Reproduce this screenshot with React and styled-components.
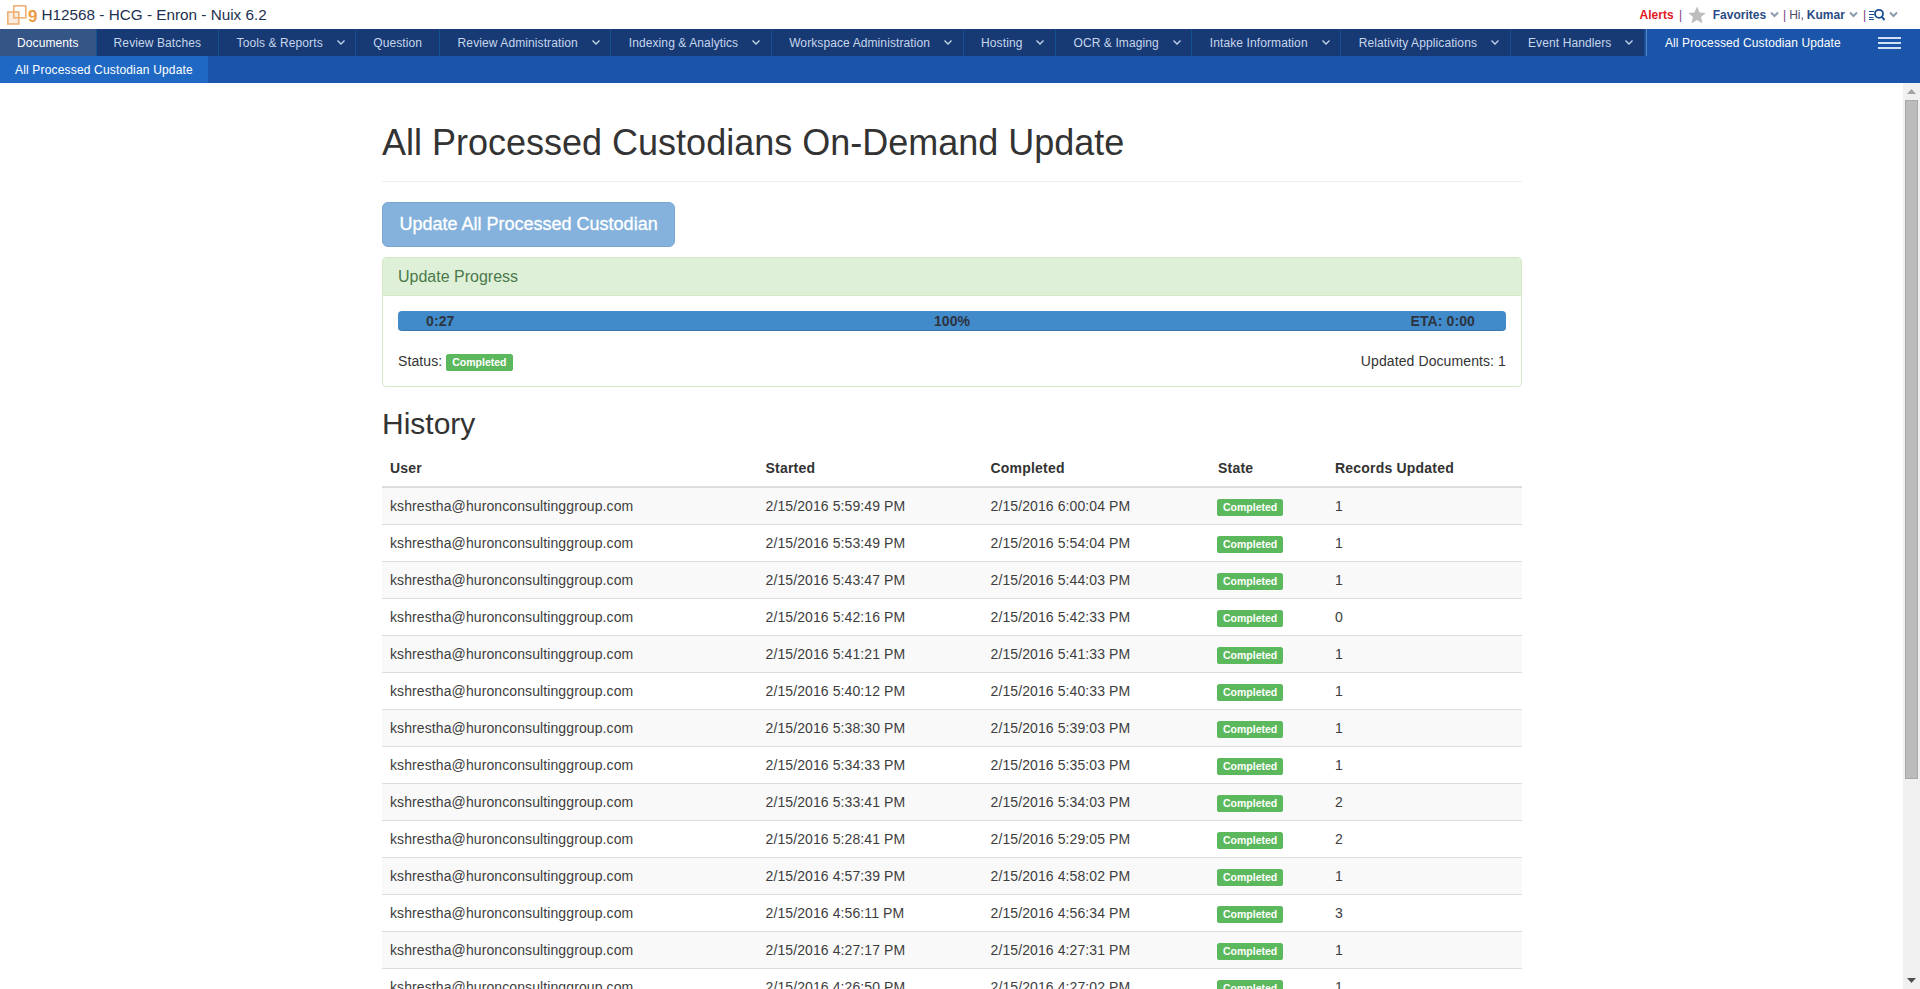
import React from "react";
import styled, { createGlobalStyle } from "styled-components";

const GlobalStyle = createGlobalStyle`
  html, body {
    margin: 0;
    height: 100%;
    overflow: hidden;
    background: #fff;
    font-family: "Liberation Sans", Arial, sans-serif;
    font-size: 14px;
    color: #333;
  }
`;

const Page = styled.div`
  display: flex;
  flex-direction: column;
  height: 100vh;
  overflow: hidden;
`;

const TopBar = styled.header`
  display: flex;
  align-items: center;
  justify-content: space-between;
  height: 29px;
  flex: none;
  padding: 0 22px 0 7px;
`;

const Brand = styled.div`
  display: flex;
  align-items: center;
`;

const BrandNine = styled.span`
  font-size: 17px;
  font-weight: 700;
  color: #ec9c45;
  margin: 5px 4px 0 1px;
`;

const BrandTitle = styled.span`
  font-size: 15.3px;
  color: #1c2f4f;
`;

const UserBar = styled.div`
  display: flex;
  align-items: center;
  font-size: 12px;
  color: #1c4f92;
`;

const Alerts = styled.span`
  color: #e0191f;
  font-weight: 700;
`;

const Pipe = styled.span`
  color: #7a3b7a;
  margin: ${(p) => p.$margin};
`;

const UserLink = styled.span`
  font-weight: 700;
  color: #2a4a85;
  margin-left: ${(p) => p.$gap || "0"};
`;

const Greeting = styled.span`
  color: #4a4a66;
  margin-right: 3px;
`;

const Caret = styled.svg`
  width: 9px;
  height: 7px;
  margin-left: 4px;
  fill: none;
  stroke: #8d9bb0;
  stroke-width: 2;
`;

const NavBar = styled.nav`
  display: flex;
  height: 27px;
  flex: none;
  background: #1b55a9;
`;

const Tabs = styled.div`
  display: flex;
  background: #183a74;
`;

const Tab = styled.div`
  display: flex;
  align-items: center;
  box-sizing: border-box;
  padding: ${(p) => (p.$menu ? "0 10.5px 0 17.5px" : "0 17px")};
  font-size: 12px;
  letter-spacing: 0.1px;
  white-space: nowrap;
  color: ${(p) => (p.$active ? "#fff" : "#c6d6ec")};
  background: ${(p) => (p.$active ? "#365587" : "transparent")};
  border-right: 1px solid #16508f;
`;

const TabChevron = styled.svg`
  width: 8px;
  height: 5px;
  margin-left: 14px;
  fill: none;
  stroke: #c6d6ec;
  stroke-width: 1.3;
`;

const CurrentTab = styled.div`
  display: flex;
  align-items: center;
  flex: 1;
  margin-left: 1px;
  padding-left: 18px;
  font-size: 12px;
  letter-spacing: 0.1px;
  color: #fff;
  border-left: 1px solid #5b86c4;
`;

const Burger = styled.div`
  display: flex;
  flex-direction: column;
  justify-content: center;
  gap: 3px;
  width: 23px;
  margin-right: 19px;
  margin-left: auto;

  span {
    display: block;
    height: 2px;
    background: #d3e1f5;
  }
`;

const SubBar = styled.div`
  display: flex;
  height: 27px;
  flex: none;
  background: #1b55a9;
`;

const SubTab = styled.div`
  display: flex;
  align-items: center;
  padding: 0 15px;
  font-size: 12px;
  letter-spacing: 0.17px;
  color: #fff;
  background: #1f69c4;
`;

const Body = styled.div`
  display: flex;
  flex: 1;
  min-height: 0;
`;

const Content = styled.main`
  flex: 1;
  min-width: 0;
  padding-left: 1px;
  overflow: hidden;
`;

const Container = styled.div`
  width: 1140px;
  margin: 0 auto;
`;

const PageHeader = styled.h1`
  margin: 40px 0 20px;
  padding-bottom: 18px;
  font-size: 36px;
  font-weight: 400;
  line-height: 40px;
  border-bottom: 1px solid #eee;
`;

const UpdateButton = styled.button`
  display: block;
  height: 45px;
  padding: 0 16.5px;
  font-family: inherit;
  font-size: 18px;
  line-height: 1.33;
  color: #fff;
  -webkit-text-stroke: 0.3px #fff;
  background: #85b2dc;
  border: 1px solid #7aa6d2;
  border-radius: 6px;
`;

const Panel = styled.section`
  margin-top: 10px;
  background: #fff;
  border: 1px solid #d6e9c6;
  border-radius: 4px;
`;

const PanelHeading = styled.div`
  padding: 10px 15px;
  height: 38px;
  box-sizing: border-box;
  font-size: 16px;
  line-height: 18px;
  color: #4a7a4b;
  background: #dff0d8;
  border-bottom: 1px solid #d6e9c6;
`;

const PanelBody = styled.div`
  padding: 15px;
`;

const Progress = styled.div`
  display: grid;
  grid-template-columns: 1fr auto 1fr;
  align-items: center;
  box-sizing: border-box;
  height: 20px;
  padding: 0 31px;
  font-size: 14px;
  font-weight: 700;
  letter-spacing: 0.1px;
  color: #2d3440;
  background: #428bca;
  border-radius: 4px;
  box-shadow: inset 0 -1px 0 rgba(0, 0, 0, 0.15);
`;

const ProgressElapsed = styled.span`
  margin-left: -3px;
`;

const ProgressEta = styled.span`
  text-align: right;
`;

const StatusRow = styled.div`
  display: flex;
  align-items: center;
  justify-content: space-between;
  margin-top: 20px;
  line-height: 20px;
  letter-spacing: 0.1px;
`;

const Label = styled.span`
  display: inline-block;
  padding: 3px 6px 3.5px;
  font-size: 10.5px;
  font-weight: 700;
  letter-spacing: 0;
  line-height: 1;
  color: #fff;
  background: #5cb85c;
  border-radius: 2.6px;
  margin-left: ${(p) => (p.$inline ? "4px" : "-1px")};
  vertical-align: baseline;
`;

const SectionTitle = styled.h2`
  margin: 20px 0 10px;
  font-size: 30px;
  font-weight: 400;
  line-height: 33px;
`;

const Table = styled.table`
  width: 100%;
  border-collapse: collapse;
  table-layout: fixed;
`;

const HeadCell = styled.th`
  width: ${(p) => p.$width};
  box-sizing: border-box;
  padding: 8px;
  text-align: left;
  font-size: 14px;
  line-height: 20px;
  letter-spacing: 0.2px;
  border-bottom: 2px solid #ddd;
`;

const Row = styled.tr`
  background: ${(p) => (p.$odd ? "#f9f9f9" : "#fff")};
`;

const Cell = styled.td`
  padding: 8px;
  height: 20px;
  line-height: 20px;
  letter-spacing: 0.1px;
  color: #3d3d3d;
  border-bottom: 1px solid #ddd;
`;

const Scrollbar = styled.div`
  position: relative;
  display: flex;
  flex-direction: column;
  align-items: center;
  justify-content: space-between;
  flex: none;
  width: 17px;
  background: #f0f0f0;
`;

const Thumb = styled.div`
  position: absolute;
  top: 17px;
  left: 2px;
  width: 13px;
  height: 679px;
  box-sizing: border-box;
  background: #bcbcbc;
  border: 1px solid #a8a8a8;
`;

const Arrow = styled.svg`
  width: 9px;
  height: 5px;
  margin: 6px 0;
  fill: ${(p) => p.$color};
`;

const ROWS = [
  ["2/15/2016 5:59:49 PM", "2/15/2016 6:00:04 PM", 1],
  ["2/15/2016 5:53:49 PM", "2/15/2016 5:54:04 PM", 1],
  ["2/15/2016 5:43:47 PM", "2/15/2016 5:44:03 PM", 1],
  ["2/15/2016 5:42:16 PM", "2/15/2016 5:42:33 PM", 0],
  ["2/15/2016 5:41:21 PM", "2/15/2016 5:41:33 PM", 1],
  ["2/15/2016 5:40:12 PM", "2/15/2016 5:40:33 PM", 1],
  ["2/15/2016 5:38:30 PM", "2/15/2016 5:39:03 PM", 1],
  ["2/15/2016 5:34:33 PM", "2/15/2016 5:35:03 PM", 1],
  ["2/15/2016 5:33:41 PM", "2/15/2016 5:34:03 PM", 2],
  ["2/15/2016 5:28:41 PM", "2/15/2016 5:29:05 PM", 2],
  ["2/15/2016 4:57:39 PM", "2/15/2016 4:58:02 PM", 1],
  ["2/15/2016 4:56:11 PM", "2/15/2016 4:56:34 PM", 3],
  ["2/15/2016 4:27:17 PM", "2/15/2016 4:27:31 PM", 1],
  ["2/15/2016 4:26:50 PM", "2/15/2016 4:27:02 PM", 1],
];

const TABS = [
  { name: "Documents", active: true },
  { name: "Review Batches" },
  { name: "Tools & Reports", menu: true },
  { name: "Question" },
  { name: "Review Administration", menu: true },
  { name: "Indexing & Analytics", menu: true },
  { name: "Workspace Administration", menu: true },
  { name: "Hosting", menu: true },
  { name: "OCR & Imaging", menu: true },
  { name: "Intake Information", menu: true },
  { name: "Relativity Applications", menu: true },
  { name: "Event Handlers", menu: true },
];

function Logo() {
  return (
    <svg width="20" height="20" viewBox="0 0 20 20" fill="none" stroke="#eeb277" strokeWidth="1.6">
      <rect x="6.8" y="0.8" width="12" height="12" />
      <rect x="0.8" y="7" width="11" height="12" fill="rgba(240,180,120,0.25)" />
    </svg>
  );
}

function SmallCaret() {
  return (
    <Caret viewBox="0 0 9 7">
      <polyline points="1,1.5 4.5,5 8,1.5" />
    </Caret>
  );
}

function Star() {
  return (
    <svg width="18" height="18" viewBox="0 0 18 18" fill="#bdbdbd">
      <polygon points="9,0.5 11.6,6.4 17.8,6.9 13,11 14.6,17.4 9,14 3.4,17.4 5,11 0.2,6.9 6.4,6.4" />
    </svg>
  );
}

function SearchList() {
  return (
    <svg width="16" height="13" viewBox="0 0 16 13" fill="none" stroke="#1c4f92">
      <path d="M0 3.5h5M0 6.5h5M0 9.5h4.5M0 11.5h5" strokeWidth="1" />
      <circle cx="10" cy="5.8" r="4" strokeWidth="1.8" />
      <path d="M12.6 8.6l3 3.4" strokeWidth="2" />
    </svg>
  );
}

export default function App() {
  return (
    <Page>
      <GlobalStyle />
      <TopBar>
        <Brand>
          <Logo />
          <BrandNine>9</BrandNine>
          <BrandTitle>H12568 - HCG - Enron - Nuix 6.2</BrandTitle>
        </Brand>
        <UserBar>
          <Alerts>Alerts</Alerts>
          <Pipe $margin="0 5.5px">|</Pipe>
          <Star />
          <UserLink $gap="7px">Favorites</UserLink>
          <SmallCaret />
          <Pipe $margin="0 3px 0 4px">|</Pipe>
          <Greeting>Hi,</Greeting>
          <UserLink>Kumar</UserLink>
          <SmallCaret />
          <Pipe $margin="0 3px 0 5px">|</Pipe>
          <SearchList />
          <SmallCaret />
        </UserBar>
      </TopBar>
      <NavBar>
        <Tabs>
          {TABS.map((tab) => (
            <Tab key={tab.name} $active={tab.active} $menu={tab.menu}>
              {tab.name}
              {tab.menu && (
                <TabChevron viewBox="0 0 8 5">
                  <polyline points="0.5,0.5 4,4 7.5,0.5" />
                </TabChevron>
              )}
            </Tab>
          ))}
        </Tabs>
        <CurrentTab>
          All Processed Custodian Update
          <Burger>
            <span />
            <span />
            <span />
          </Burger>
        </CurrentTab>
      </NavBar>
      <SubBar>
        <SubTab>All Processed Custodian Update</SubTab>
      </SubBar>
      <Body>
        <Content>
          <Container>
            <PageHeader>All Processed Custodians On-Demand Update</PageHeader>
            <UpdateButton>Update All Processed Custodian</UpdateButton>
            <Panel>
              <PanelHeading>Update Progress</PanelHeading>
              <PanelBody>
                <Progress>
                  <ProgressElapsed>0:27</ProgressElapsed>
                  <span>100%</span>
                  <ProgressEta>ETA: 0:00</ProgressEta>
                </Progress>
                <StatusRow>
                  <span>
                    Status:<Label $inline>Completed</Label>
                  </span>
                  <span>Updated Documents: 1</span>
                </StatusRow>
              </PanelBody>
            </Panel>
            <SectionTitle>History</SectionTitle>
            <Table>
              <thead>
                <tr>
                  <HeadCell $width="375.5px">User</HeadCell>
                  <HeadCell $width="225px">Started</HeadCell>
                  <HeadCell $width="227.5px">Completed</HeadCell>
                  <HeadCell $width="117px">State</HeadCell>
                  <HeadCell>Records Updated</HeadCell>
                </tr>
              </thead>
              <tbody>
                {ROWS.map(([started, completed, records], i) => (
                  <Row key={started} $odd={i % 2 === 0}>
                    <Cell>kshrestha@huronconsultinggroup.com</Cell>
                    <Cell>{started}</Cell>
                    <Cell>{completed}</Cell>
                    <Cell>
                      <Label>Completed</Label>
                    </Cell>
                    <Cell>{records}</Cell>
                  </Row>
                ))}
              </tbody>
            </Table>
          </Container>
        </Content>
        <Scrollbar>
          <Arrow viewBox="0 0 9 5" $color="#a3a3a3">
            <polygon points="4.5,0 9,5 0,5" />
          </Arrow>
          <Thumb />
          <Arrow viewBox="0 0 9 5" $color="#505050">
            <polygon points="0,0 9,0 4.5,5" />
          </Arrow>
        </Scrollbar>
      </Body>
    </Page>
  );
}
